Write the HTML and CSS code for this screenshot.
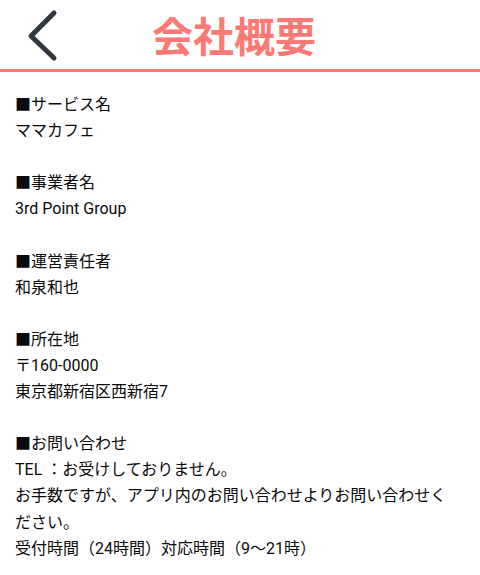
FILE: index.html
```html
<!DOCTYPE html>
<html lang="ja">
<head>
<meta charset="utf-8">
<link rel="stylesheet" href="styles.css">
</head>
<body>
<header class="header">
  <svg class="back" width="40" height="58" viewBox="0 0 40 58">
    <path d="M31 7 L8 30 L31 52" fill="none" stroke="#30373e" stroke-width="5" stroke-linecap="round" stroke-linejoin="round"/>
  </svg>
  <h1 class="title">会社概要</h1>
</header>
<main class="content">
  <p>■サービス名<br>ママカフェ</p>
  <p>■事業者名<br>3rd Point Group</p>
  <p>■運営責任者<br>和泉和也</p>
  <p>■所在地<br>〒160-0000<br>東京都新宿区西新宿7</p>
  <p>■お問い合わせ<br>TEL ：お受けしておりません。<br>お手数ですが、アプリ内のお問い合わせよりお問い合わせください。<br>受付時間（24時間）対応時間（9〜21時）</p>
</main>
</body>
</html>
```
FILE: styles.css
```css
html, body {
  margin: 0;
  padding: 0;
  background: #ffffff;
}
body {
  font-family: Roboto, "Noto Sans CJK JP", sans-serif;
  color: #0a0a0a;
  width: 480px;
}
.header {
  height: 69px;
  border-bottom: 3px solid #fc7a73;
  display: flex;
  align-items: center;
  padding-left: 23px;
}
.back {
  display: block;
  flex: none;
}
.title {
  margin: 0 0 0 89px;
  font-family: "Noto Sans CJK JP", sans-serif;
  font-weight: 700;
  font-size: 41px;
  line-height: 1;
  color: #fc7a73;
  letter-spacing: 0;
}
.content {
  padding: 20px 24px 0 15px;
  font-size: 16px;
  line-height: 26.1px;
}
.content p {
  margin: 0 0 26.1px 0;
}
```
